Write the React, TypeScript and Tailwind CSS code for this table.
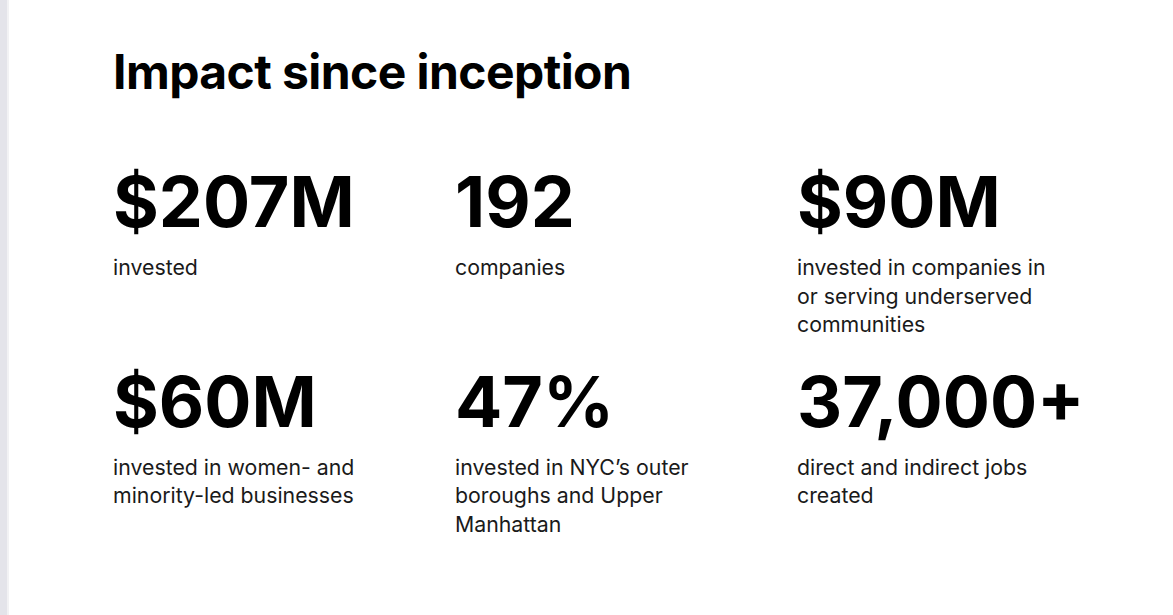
import React from 'react'

const stats = [
  { value: '$207M', label: 'invested' },
  { value: '192', label: 'companies' },
  { value: '$90M', label: 'invested in companies in or serving underserved communities' },
  { value: '$60M', label: 'invested in women- and minority-led businesses' },
  { value: '47%', label: 'invested in NYC’s outer boroughs and Upper Manhattan' },
  { value: '37,000+', label: 'direct and indirect jobs created' },
]

const Stat = ({ value, label }: { value: string; label: string }) => {
  return (
    <div className="flex flex-col">
      <div className="text-[70px] font-bold leading-none text-black">{value}</div>
      <p className="mt-[16px] w-[262px] text-[21.3px] leading-[28.5px] text-[#1a1a1a]">{label}</p>
    </div>
  )
}

const App = () => {
  return (
    <div
      className="flex h-[615px] w-full bg-white"
      style={{ fontFamily: 'Inter, "Noto Sans", sans-serif' }}
    >
      <div className="w-[7px] shrink-0 bg-[#e4e4ea]" />
      <div className="w-[2px] shrink-0 bg-[#f2f2f4]" />
      <main className="pl-[104px] pt-[48px]">
        <h1 className="text-[48px] font-bold leading-none tracking-[-0.012em] text-black">
          Impact since inception
        </h1>
        <div className="mt-[71px] grid w-[1026px] grid-cols-3 gap-y-[28px]">
          {stats.map((s) => (
            <Stat key={s.value} value={s.value} label={s.label} />
          ))}
        </div>
      </main>
    </div>
  )
}

export default App
